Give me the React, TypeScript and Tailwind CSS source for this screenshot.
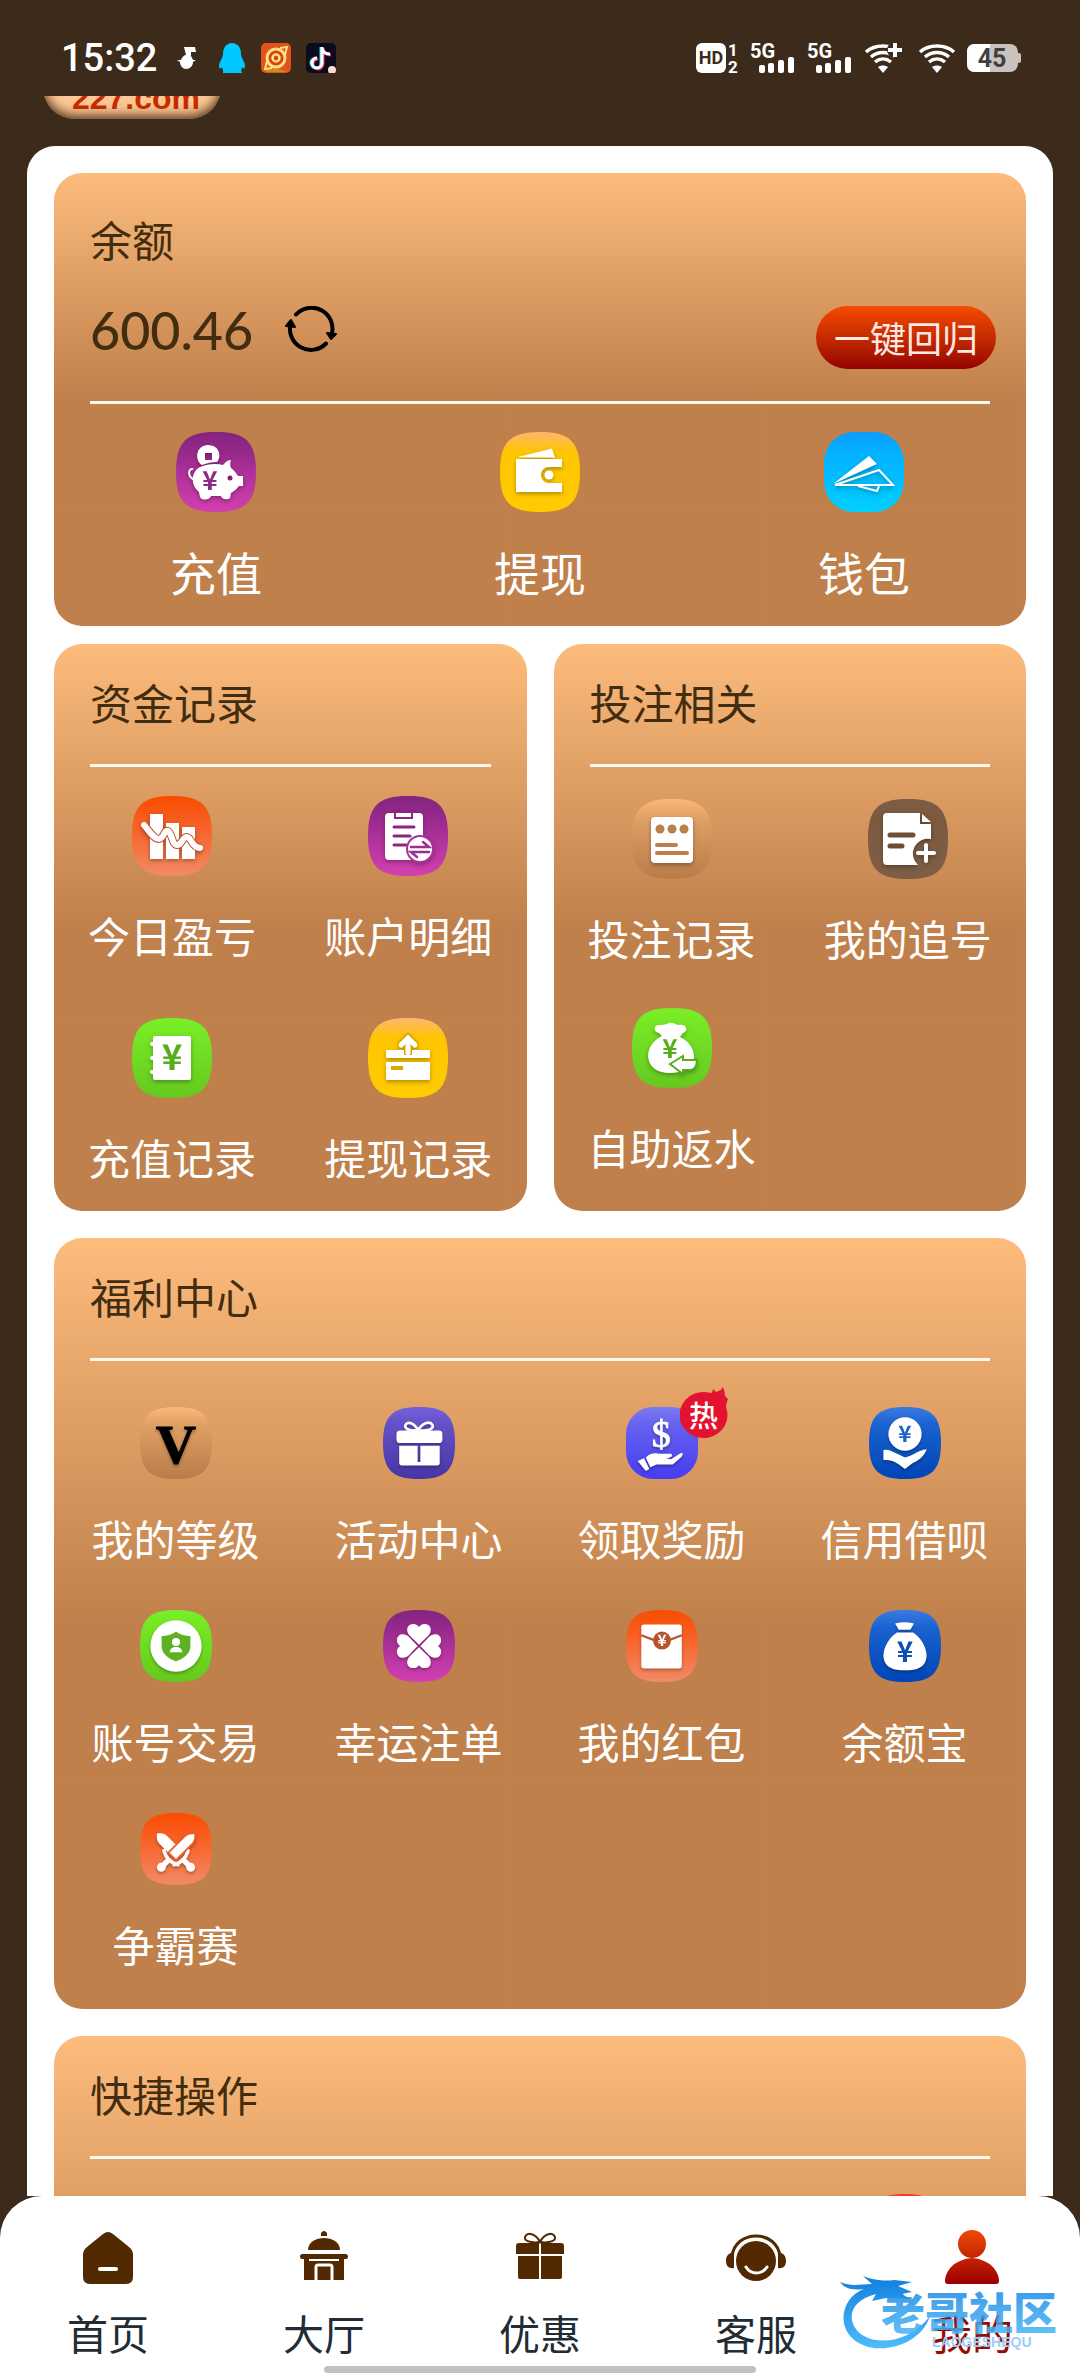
import type { ReactNode } from "react";

type Tone =
  | "purple"
  | "yellow"
  | "sky"
  | "orange"
  | "green"
  | "tan"
  | "brown"
  | "violet"
  | "indigo"
  | "blue"
  | "red";

const tones: Record<Tone, string[]> = {
  purple: ["#84247f", "#96298b", "#d440b0"],
  yellow: ["#ffb56e", "#ffc600", "#ffcb00"],
  sky: ["#0a9dff", "#05b0ff", "#00cfff"],
  orange: ["#f94d00", "#f8591a", "#f38a66"],
  green: ["#7aef28", "#74e524", "#66c81f"],
  tan: ["#fcb878", "#dfa064", "#b97c49"],
  brown: ["#7d5d43", "#7b5a40", "#7d5f45"],
  violet: ["#7560dd", "#6351c6", "#4636a4"],
  indigo: ["#7b7bf2", "#6462f0", "#473cf0"],
  blue: ["#3a7be0", "#1a62d0", "#0045b6"],
  red: ["#f83a2e", "#f0302a", "#d81f20"],
};

const Yuan = ({ x, y, size, fill }: { x: number; y: number; size: number; fill: string }) => (
  <text
    x={x}
    y={y}
    fontSize={size}
    fill={fill}
    textAnchor="middle"
    className="font-['Noto_Sans_CJK_SC',sans-serif] font-bold"
  >
    ¥
  </text>
);

const heart =
  "M40 38.500L30 29C25 24 26 16 33 15.500C36 15 39 17 40 19C41 17 44 15 47 15.500C54 16 55 24 50 29Z";

const glyphs: Record<string, ReactNode> = {
  piggy: (
    <>
      <path
        fillRule="evenodd"
        d="M26 33C18 28 20 13 32 13C43 13 46 24 41 30C36 30 31 31 26 33ZM29 21v7h7v-7Z"
      />
      <path d="M24 35C31 32 40 31 47 33C49 31 51 28 55 28C54 31 54 33 55 36C58 38 60 41 62 44H67V54H63C61 57 58 59 55 61L54 66C52 68 46 68 45 64H35C34 68 26 69 24 65L23 60C14 53 15 40 24 35Z" />
      <path d="M19 48C11 45 12 36 17 37" fill="none" stroke="#fff" strokeWidth="2" />
      <circle cx="54" cy="46" r="2.5" fill="#7c2377" />
      <Yuan x={34} y={58} size={26} fill="#8c2a85" />
    </>
  ),
  wallet: (
    <>
      <path d="M18 25L52 16.500L55 26H25Z" />
      <path d="M16 27H62V35H49a8 8 0 0 0 0 16H62V60H16Z" />
      <path d="M22 26H53" stroke="#d9a800" strokeWidth="1" />
      <circle cx="49" cy="43" r="4.500" />
    </>
  ),
  plane: (
    <>
      <path d="M9 52L45 24L53 32Z" />
      <path d="M11 53L55 38L69 53Z" fill="none" stroke="#fff" strokeWidth="2" />
      <path d="M34 54L53 59L55 54" fill="none" stroke="#fff" strokeWidth="2" />
    </>
  ),
  chart: (
    <>
      <path d="M18 18H31V63H18ZM34 27H47V63H34ZM50 31H63V63H50Z" />
      <path
        d="M12 29C18 36 22 43 27 43C32 43 32 33 36 35C40 37 40 49 45 49C50 49 51 40 55 41C60 42 59 51 68 52"
        fill="none"
        stroke="#c4502c"
        strokeWidth="8"
      />
      <path
        d="M12 29C18 36 22 43 27 43C32 43 32 33 36 35C40 37 40 49 45 49C50 49 51 40 55 41C60 42 59 51 68 52"
        fill="none"
        stroke="#fff"
        strokeWidth="6"
        strokeLinecap="round"
      />
    </>
  ),
  clipboard: (
    <>
      <rect x="17" y="17" width="38" height="47" rx="4" />
      <path d="M27 16H44V22H27Z" stroke="#8a2783" strokeWidth="2" />
      <path d="M26 31H46M26 40H42M26 49H38" stroke="#8a2783" strokeWidth="3" strokeLinecap="round" />
      <circle cx="52" cy="53" r="13" stroke="#a93399" strokeWidth="2" />
      <path
        d="M43 51H61L55 46M61 56H43L49 61"
        fill="none"
        stroke="#9c2f8f"
        strokeWidth="2.500"
        strokeLinecap="round"
      />
    </>
  ),
  book: (
    <>
      <rect x="21" y="18" width="38" height="44" rx="2" />
      <path d="M20 26H24M20 40H24M20 54H24" stroke="#fff" strokeWidth="4" strokeLinecap="round" />
      <Yuan x={40} y={52} size={35} fill="#58ad1c" />
    </>
  ),
  card: (
    <>
      <rect x="18" y="32" width="44" height="8" rx="1" />
      <rect x="18" y="44" width="44" height="18" rx="1" />
      <path d="M23 50H35" stroke="#d9a900" strokeWidth="4" />
      <path d="M40 37V22M32 28L40 20L48 28" fill="none" stroke="#d9a900" strokeWidth="8" />
      <path
        d="M40 35V21M33 27L40 20L47 27"
        fill="none"
        stroke="#fff"
        strokeWidth="5"
        strokeLinecap="round"
      />
    </>
  ),
  slip: (
    <>
      <rect x="19" y="18" width="42" height="46" rx="4" />
      <g fill="#b9804e">
        <circle cx="28" cy="30" r="4.500" />
        <circle cx="40" cy="30" r="4.500" />
        <circle cx="52" cy="30" r="4.500" />
      </g>
      <path d="M25 46H44M25 54H55" stroke="#b9804e" strokeWidth="4" strokeLinecap="round" />
    </>
  ),
  chase: (
    <>
      <path d="M19 14H52V25H63V40A15 15 0 0 0 50 66H19Q15 66 15 62V18Q15 14 19 14Z" />
      <path d="M54 15L63 23H54Z" />
      <path d="M22 36H45M22 47H34" stroke="#6f4e35" strokeWidth="5" strokeLinecap="round" />
      <path d="M58 46V62M50 54H66" stroke="#fff" strokeWidth="4" strokeLinecap="round" />
    </>
  ),
  rebate: (
    <>
      <path d="M27 25C21 24 21 16 28 17C32 17 34 16 37 15C40 14 43 16 46 17C55 15 57 23 51 25L48 29C57 33 63 42 62 50C60 61 49 65 38 65C24 65 16 58 16 47C17 38 22 32 30 28Z" />
      <path
        d="M38 56L51 48V52H65C65 58 63 61 59 62H51V66Z"
        stroke="#58ad1c"
        strokeWidth="2"
      />
      <Yuan x={38} y={50} size={26} fill="#58ad1c" />
    </>
  ),
  vip: (
    <text
      x="40"
      y="62"
      fontSize="62"
      fill="#000"
      stroke="#000"
      strokeWidth="1"
      textAnchor="middle"
      className="font-['Liberation_Serif',serif] font-bold"
    >
      V
    </text>
  ),
  gift: (
    <>
      <path
        d="M39 26C30 27 23 24 25 20C27 15 35 18 39 26C43 18 52 15 55 20C57 24 50 27 41 26"
        fill="none"
        stroke="#fff"
        strokeWidth="3"
      />
      <rect x="15" y="26" width="51" height="14" rx="4" />
      <path d="M18 43H38.500V61H41.500V43H63V62Q63 65 60 65H21Q18 65 18 62Z" />
    </>
  ),
  reward: (
    <>
      <text
        x="39"
        y="44"
        fontSize="42"
        stroke="#fff"
        strokeWidth="1"
        textAnchor="middle"
        className="font-['Liberation_Serif',serif]"
      >
        $
      </text>
      <path d="M20 57L26 69L22 71L13 60Z" />
      <path d="M22 56C28 51 32 51 37 52H50C53 54 50 57 44 57L50 58L61 51C64 51 64 53 60 57L52 64H34L27 67Z" />
    </>
  ),
  loan: (
    <>
      <circle cx="40" cy="30" r="18.500" />
      <Yuan x={40} y={39} size={25} fill="#1d62c8" />
      <path d="M16 48C22 46 26 50 40 56C50 54 54 48 64 47C62 54 55 60 49 62L40 69C32 63 27 58 16 59Z" />
    </>
  ),
  trade: (
    <>
      <circle cx="40" cy="40" r="28.500" />
      <path d="M40 24C45 28 51 29 56 29V40C56 49 48 54 40 57C32 54 24 49 24 40V29C29 29 35 28 40 24Z" fill="#5fb023" />
      <circle cx="40" cy="35.500" r="4.500" />
      <path d="M33 47C33 39 47 39 47 47Z" />
    </>
  ),
  clover: (
    <>
      <path d={heart} />
      <path d={heart} transform="rotate(90 40 40)" />
      <path d={heart} transform="rotate(180 40 40)" />
      <path d={heart} transform="rotate(270 40 40)" />
    </>
  ),
  packet: (
    <>
      <rect x="17" y="16" width="45" height="49" rx="3" />
      <path d="M17 28L31 33.500H48L62 28" fill="none" stroke="#b75430" strokeWidth="2.500" />
      <circle cx="40" cy="34" r="10" fill="#b75430" />
      <Yuan x={40} y={40} size={17} fill="#fff" />
    </>
  ),
  bag: (
    <>
      <path d="M29 15C36 13 43 13 50 15L46 22H33Z" />
      <path d="M31 25H49C57 30 64 41 64 51C63 64 53 67 40 67C27 67 17 64 16 51C16 41 23 30 31 25Z" />
      <Yuan x={40} y={58} size={31} fill="#0d4fb5" />
    </>
  ),
  swords: (
    <>
      <g transform="rotate(-45 40 44)">
        <path d="M40 14C45 18 46 21 46 24V50H34V24C34 21 35 18 40 14Z" />
        <path d="M29 52C36 56 44 56 51 52" fill="none" stroke="#fff" strokeWidth="4" strokeLinecap="round" />
        <path d="M37 54H43V63A5 5 0 1 1 37 63Z" />
      </g>
      <g transform="rotate(45 40 44)">
        <path
          d="M40 14C45 18 46 21 46 24V50H34V24C34 21 35 18 40 14Z"
          stroke="#f0602a"
          strokeWidth="2"
        />
        <path d="M29 52C36 56 44 56 51 52" fill="none" stroke="#fff" strokeWidth="4" strokeLinecap="round" />
        <path d="M37 54H43V63A5 5 0 1 1 37 63Z" />
      </g>
    </>
  ),
};

interface Item {
  label: string;
  glyph: string;
  tone: Tone;
  square?: boolean;
  hot?: boolean;
}

const walletItems: Item[] = [
  { label: "充值", glyph: "piggy", tone: "purple" },
  { label: "提现", glyph: "wallet", tone: "yellow" },
  { label: "钱包", glyph: "plane", tone: "sky", square: true },
];

const fundItems: Item[] = [
  { label: "今日盈亏", glyph: "chart", tone: "orange" },
  { label: "账户明细", glyph: "clipboard", tone: "purple" },
  { label: "充值记录", glyph: "book", tone: "green" },
  { label: "提现记录", glyph: "card", tone: "yellow" },
];

const betItems: Item[] = [
  { label: "投注记录", glyph: "slip", tone: "tan" },
  { label: "我的追号", glyph: "chase", tone: "brown" },
  { label: "自助返水", glyph: "rebate", tone: "green" },
];

const welfareItems: Item[] = [
  { label: "我的等级", glyph: "vip", tone: "tan" },
  { label: "活动中心", glyph: "gift", tone: "violet" },
  { label: "领取奖励", glyph: "reward", tone: "indigo", square: true, hot: true },
  { label: "信用借呗", glyph: "loan", tone: "blue" },
  { label: "账号交易", glyph: "trade", tone: "green" },
  { label: "幸运注单", glyph: "clover", tone: "purple" },
  { label: "我的红包", glyph: "packet", tone: "orange" },
  { label: "余额宝", glyph: "bag", tone: "blue" },
  { label: "争霸赛", glyph: "swords", tone: "orange" },
];

function Tile({ glyph, tone, square, className }: { glyph?: string; tone: Tone; square?: boolean; className: string }) {
  const id = `tile-${tone}`;
  const [from, mid, to] = tones[tone];
  return (
    <svg viewBox="0 0 80 80" className={className} aria-hidden="true">
      <defs>
        <linearGradient id={id} x1="0" y1="0" x2="0" y2="1">
          <stop offset="0" stopColor={from} />
          <stop offset="0.25" stopColor={mid} />
          <stop offset="1" stopColor={to} />
        </linearGradient>
      </defs>
      {square ? (
        <rect width="80" height="80" rx="30" fill={`url(#${id})`} />
      ) : (
        <path
          d="M40 0C70 0 80 10 80 40S70 80 40 80S0 70 0 40S10 0 40 0Z"
          fill={`url(#${id})`}
        />
      )}
      {glyph && (
        <g fill="#fff" className="drop-shadow-[0_2px_2px_rgba(0,0,0,0.3)]">
          {glyphs[glyph]}
        </g>
      )}
    </svg>
  );
}

function MenuItem({ item, tileSize, textSize }: { item: Item; tileSize: string; textSize: string }) {
  return (
    <button type="button" className="flex flex-col items-center gap-[31px] text-white">
      <span className="relative block">
        <Tile glyph={item.glyph} tone={item.tone} square={item.square} className={tileSize} />
        {item.hot && (
          <span className="absolute -top-[20px] -right-[30px] block h-[52px] w-[48px]">
            <svg viewBox="0 0 48 52" className="h-full w-full" aria-hidden="true">
              <path
                d="M24 5C27 5 30 6 32 6L33 2L36 5C40 4 42 2 43 0C44 3 45 6 45 9L48 12C47 15 46 17 46 20A24 23 0 1 1 24 5Z"
                fill="#e3122f"
              />
            </svg>
            <span className="absolute inset-x-0 top-[7px] text-center text-[29px] leading-10 font-medium">热</span>
          </span>
        )}
      </span>
      <span className={`${textSize} leading-14 whitespace-nowrap`}>{item.label}</span>
    </button>
  );
}

function Panel({ title, children }: { title: string; children: ReactNode }) {
  return (
    <section className="rounded-[28px] bg-linear-to-b from-[#fdbc7c] to-[#bf804b] to-50% pt-7">
      <h2 className="px-9 text-[42px] leading-[60px] text-[#432d10]">{title}</h2>
      <div className="mx-9 mt-8 h-[3px] bg-[#fffaf0]" />
      {children}
    </section>
  );
}

function SignalBars() {
  return (
    <svg viewBox="0 0 45 30" className="h-[30px] w-[45px] overflow-visible" aria-hidden="true">
      <text
        x="0"
        y="15"
        fontSize="20"
        fill="#fff"
        className="font-[Roboto,sans-serif] font-bold"
      >
        5G
      </text>
      <g fill="#fff">
        <rect x="9" y="22" width="6" height="8" rx="2" />
        <rect x="18" y="20" width="6" height="10" rx="2" />
        <rect x="28" y="17" width="6" height="13" rx="2" />
        <rect x="38" y="14" width="6" height="16" rx="2" />
      </g>
    </svg>
  );
}

function Wifi({ plus }: { plus?: boolean }) {
  return (
    <svg viewBox="0 0 38 30" className="h-[30px] w-[38px]" aria-hidden="true">
      <g fill="none" stroke="#fff" strokeWidth="3.500">
        <path d="M2 9C11 1 27 1 36 9" />
        <path d="M7 14C14 8 24 8 31 14" />
        <path d="M11 19C16 15 22 15 27 19" />
      </g>
      <path d="M14 24C17 22 21 22 24 24L19 30Z" fill="#fff" />
      {plus && (
        <>
          <circle cx="31" cy="7" r="8" fill="#3c2b1b" />
          <path d="M31 0V14M24 7H38" stroke="#fff" strokeWidth="4" />
        </>
      )}
    </svg>
  );
}

function StatusBar() {
  return (
    <div className="flex h-24 shrink-0 items-center justify-between pt-5 pr-[59px] pl-[61px] text-white">
      <div className="flex items-center">
        <span className="font-[Roboto,sans-serif] text-[38px] leading-10 font-medium">15:32</span>
        <svg viewBox="0 0 20 22" className="ml-5 h-[22px] w-5" aria-hidden="true">
          <path
            d="M7 0H18L19 5H14V9C15 11 16 12 16 13H19L16 15C16 19 13 22 9 22C6 22 3 19 3 15L0 13H4C5 10 7 8 9 8Z"
            fill="#fff"
          />
        </svg>
        <svg viewBox="0 0 26 30" className="ml-[22px] h-[30px] w-[26px]" aria-hidden="true">
          <path
            d="M13 0C19 0 22 5 22 11C22 15 26 19 26 23C26 26 24 26 23 24C23 27 21 27 23 29V30H4V29C5 27 3 26 3 24C2 26 0 26 0 23C0 19 4 15 4 11C4 5 7 0 13 0Z"
            fill="#00c8ff"
          />
        </svg>
        <svg viewBox="0 0 30 30" className="ml-4 size-[30px]" aria-hidden="true">
          <rect width="30" height="30" rx="5" fill="#e2521c" />
          <path d="M3 26L12 24L27 29H5Z" fill="#c98a20" />
          <circle cx="15" cy="15" r="9" fill="#d8430f" stroke="#ffe184" strokeWidth="3" />
          <circle cx="15" cy="15" r="3.500" fill="none" stroke="#ffe184" strokeWidth="2.500" />
          <path d="M19 5L26 4L24 12M11 25L4 26L6 18" fill="none" stroke="#ffe184" strokeWidth="2" />
        </svg>
        <svg viewBox="0 0 30 30" className="ml-[15px] size-[30px]" aria-hidden="true">
          <rect width="30" height="30" rx="5" fill="#0b0a1e" />
          <path d="M15 4V20A5 5 0 1 1 10 15M15 5C16 9 19 11 23 11" fill="none" stroke="#28e5e8" strokeWidth="3" />
          <path d="M17 5V21A5 5 0 1 1 12 16M17 6C18 10 21 12 25 12" fill="none" stroke="#f5335d" strokeWidth="3" />
          <path d="M16 4V20A5 5 0 1 1 11 15M16 5C17 9 20 11 24 11" fill="none" stroke="#fff" strokeWidth="3" />
          <circle cx="26" cy="27" r="4" fill="#ffd9cc" />
        </svg>
      </div>
      <div className="flex items-center">
        <svg viewBox="0 0 43 30" className="h-[30px] w-[43px] overflow-visible" aria-hidden="true">
          <rect width="30" height="30" rx="6" fill="#fff" />
          <g className="font-[Roboto,sans-serif] font-bold" textAnchor="middle">
            <text x="15" y="21" fontSize="18" fill="#3c2b1b">
              HD
            </text>
            <text x="37" y="13" fontSize="17" fill="#fff">
              1
            </text>
            <text x="37" y="30" fontSize="17" fill="#fff">
              2
            </text>
          </g>
        </svg>
        <div className="ml-[11px] flex gap-3">
          <SignalBars />
          <SignalBars />
        </div>
        <div className="ml-3 flex gap-4">
          <Wifi plus />
          <Wifi />
        </div>
        <svg viewBox="0 0 54 28" className="ml-[11px] h-7 w-[54px]" aria-hidden="true">
          <rect width="51" height="28" rx="8" fill="#c9c2bd" />
          <path d="M8 0H23V28H8Q0 28 0 20V8Q0 0 8 0Z" fill="#fff" />
          <rect x="50" y="9" width="4" height="10" rx="2" fill="#c9c2bd" />
          <text
            x="25"
            y="23"
            fontSize="25"
            fill="#3f3f3f"
            textAnchor="middle"
            className="font-[Roboto,sans-serif] font-bold"
          >
            45
          </text>
        </svg>
      </div>
    </div>
  );
}

function RefreshIcon() {
  return (
    <svg viewBox="0 0 52 46" className="h-[46px] w-[52px]" aria-hidden="true">
      <g fill="none" stroke="#000" strokeWidth="4" strokeLinecap="round">
        <path d="M11 8.500A21 21 0 0 1 46.500 29" />
        <path d="M41 37.500A21 21 0 0 1 5.500 18" />
      </g>
      <g fill="#000" stroke="#000" strokeWidth="2" strokeLinejoin="round">
        <path d="M6 14L1 20L10 21Z" />
        <path d="M46 33L42 27L51 28Z" />
      </g>
    </svg>
  );
}

const navItems: { label: string; active?: boolean; icon: ReactNode }[] = [
  {
    label: "首页",
    icon: (
      <>
        <path d="M25 7Q30 3 35 7L51 20Q55 23 55 28V50Q55 57 48 57H12Q5 57 5 50V28Q5 23 9 20Z" fill="#522900" />
        <path d="M22 42H38" stroke="#fff" strokeWidth="4" strokeLinecap="round" />
      </>
    ),
  },
  {
    label: "大厅",
    icon: (
      <>
        <path
          d="M27 9V6Q30 2 33 6V9ZM14 23C14 7 46 7 46 23ZM8 27H52Q54 27 54 29.500T52 32H50V53H10V32H8Q6 32 6 29.500T8 27Z"
          fill="#522900"
        />
        <path d="M15 33H45" stroke="#fff" strokeWidth="2" />
        <path d="M22 53V40Q22 38 24 38H36Q38 38 38 40V53" fill="none" stroke="#fff" strokeWidth="3" />
      </>
    ),
  },
  {
    label: "优惠",
    icon: (
      <>
        <path d="M9 16H29V27H6V19Q6 16 9 16ZM31 16H51Q54 16 54 19V27H31ZM8 29H29V52H10Q8 52 8 50ZM31 29H52V50Q52 52 50 52H31Z" fill="#522900" />
        <path
          d="M30 15C24 16 14 15 15 10C17 4 26 7 30 15C34 7 43 4 45 10C46 15 36 16 30 15Z"
          fill="none"
          stroke="#522900"
          strokeWidth="2"
        />
      </>
    ),
  },
  {
    label: "客服",
    icon: (
      <>
        <circle cx="30" cy="34" r="20" fill="#522900" />
        <path d="M6 30C8 2 52 2 54 30" fill="none" stroke="#522900" strokeWidth="3" />
        <path d="M8 26V41C3 42 0 39 0 34S3 25 8 26ZM52 26V41C57 42 60 39 60 34S57 25 52 26Z" fill="#522900" />
        <path d="M20 40C25 48 36 48 41 40" fill="none" stroke="#fff" strokeWidth="3" strokeLinecap="round" />
      </>
    ),
  },
  {
    label: "我的",
    active: true,
    icon: (
      <>
        <defs>
          <linearGradient id="nav-user" x1="0" y1="3" x2="0" y2="57" gradientUnits="userSpaceOnUse">
            <stop offset="0" stopColor="#ee4a05" />
            <stop offset="1" stopColor="#9c0000" />
          </linearGradient>
        </defs>
        <circle cx="30" cy="17" r="14" fill="url(#nav-user)" />
        <path d="M18 34Q30 28 42 34C52 38 57 47 57 54Q57 57 54 57H6Q3 57 3 54C3 47 8 38 18 34Z" fill="url(#nav-user)" />
      </>
    ),
  },
];

function CommunityMark() {
  return (
    <svg
      viewBox="0 0 228 80"
      className="pointer-events-none absolute right-[14px] bottom-[24px] h-20 w-[228px]"
      aria-hidden="true"
    >
      <defs>
        <linearGradient id="mark-blue" x1="0" y1="0" x2="0" y2="1">
          <stop offset="0" stopColor="#0f7fe0" />
          <stop offset="1" stopColor="#4fbcfa" />
        </linearGradient>
      </defs>
      <path
        d="M2 10C14 15 22 12 34 12L25 4C38 9 48 9 56 8L74 10L60 14L74 20L64 22L72 27L48 26L34 29L38 22C18 27 9 40 16 54C26 74 68 76 92 44C82 76 34 86 14 66C-2 50 6 24 26 17C14 19 6 16 2 10Z"
        fill="url(#mark-blue)"
      />
      <text
        x="43"
        y="58"
        fontSize="44"
        fill="url(#mark-blue)"
        fillOpacity="0.85"
        className="font-['Noto_Sans_CJK_SC',sans-serif] font-black"
      >
        老哥社区
      </text>
      <text
        x="94"
        y="75"
        fontSize="14"
        fill="#9ecdf5"
        className="font-['Liberation_Sans',sans-serif] font-bold"
      >
        LAOGESHEQU
      </text>
    </svg>
  );
}

function BottomNav() {
  return (
    <nav className="relative shrink-0 rounded-t-[42px] bg-white pt-[31px] pb-[3px]">
      <div className="grid grid-cols-5">
        {navItems.map((item) => (
          <a key={item.label} href="#" className="flex flex-col items-center gap-[17px]">
            <svg viewBox="0 0 60 60" className="size-15" aria-hidden="true">
              {item.icon}
            </svg>
            <span className={item.active ? "text-[41px] leading-14 text-[#960a06]" : "text-[41px] leading-14 text-[#222c34]"}>
              {item.label}
            </span>
          </a>
        ))}
      </div>
      <div className="mx-auto mt-[6px] h-[7px] w-2/5 rounded-full bg-[#c1c1c1]" />
      <CommunityMark />
    </nav>
  );
}

function App() {
  return (
    <div className="flex h-screen flex-col overflow-hidden bg-[#3c2b1b] font-['Noto_Sans_CJK_SC',sans-serif]">
      <StatusBar />
      <main className="min-h-0 flex-1 overflow-hidden">
        {/* site logo, mostly scrolled away */}
        <div className="flex h-[23px] items-end overflow-hidden pl-[43px]">
          <div className="flex h-[76px] w-[178px] shrink-0 items-end justify-center rounded-[32px] bg-[#fcc794] pb-[3px] pl-2 font-['Liberation_Sans',sans-serif] text-[32px] leading-9 font-bold text-[#c42c00] shadow-[inset_0_-3px_12px_#4a2f15]">
            227.com
          </div>
        </div>

        <div className="mx-[27px] mt-[27px] rounded-t-[28px] bg-white px-[27px] pt-[27px]">
          <section className="rounded-[28px] bg-linear-to-b from-[#fdbc7c] to-[#bf804b] to-50% pt-9 pb-[27px]">
            <h2 className="px-9 text-[42px] leading-[60px] text-[#432d10]">余额</h2>
            <div className="mt-[37px] flex items-start justify-between pr-[30px] pl-9">
              <div className="flex items-start gap-8">
                <span className="font-[Lato,sans-serif] text-[52px] leading-12 font-medium text-[#432d10]">600.46</span>
                <button type="button" aria-label="刷新余额">
                  <RefreshIcon />
                </button>
              </div>
              <button
                type="button"
                className="h-[63px] w-[180px] rounded-full bg-linear-to-b from-[#f64b00] to-[#950000] text-[36px] leading-[63px] text-[#ffe9e2]"
              >
                一键回归
              </button>
            </div>
            <div className="mx-9 mt-8 h-[3px] bg-[#fffaf0]" />
            <div className="mt-7 grid grid-cols-3">
              {walletItems.map((item) => (
                <MenuItem key={item.label} item={item} tileSize="size-20" textSize="text-[46px]" />
              ))}
            </div>
          </section>

          <div className="mt-[18px] grid grid-cols-2 gap-[27px]">
            <Panel title="资金记录">
              <div className="grid grid-cols-2 gap-y-[55px] pt-[29px] pb-[26px]">
                {fundItems.map((item) => (
                  <MenuItem key={item.label} item={item} tileSize="size-20" textSize="text-[42px]" />
                ))}
              </div>
            </Panel>
            <Panel title="投注相关">
              <div className="grid grid-cols-2 gap-y-[42px] pt-8">
                {betItems.map((item) => (
                  <MenuItem key={item.label} item={item} tileSize="size-20" textSize="text-[42px]" />
                ))}
              </div>
            </Panel>
          </div>

          <div className="mt-[27px] flex flex-col gap-[27px]">
            <Panel title="福利中心">
              <div className="grid grid-cols-4 gap-y-[44px] pt-[46px] pb-[37px]">
                {welfareItems.map((item) => (
                  <MenuItem key={item.label} item={item} tileSize="size-18" textSize="text-[42px]" />
                ))}
              </div>
            </Panel>
            <Panel title="快捷操作">
              <div className="grid grid-cols-4 pt-[35px] pb-[480px]">
                <Tile tone="red" className="col-start-4 size-18 justify-self-center" />
              </div>
            </Panel>
          </div>
        </div>
      </main>
      <BottomNav />
    </div>
  );
}

export default App;
